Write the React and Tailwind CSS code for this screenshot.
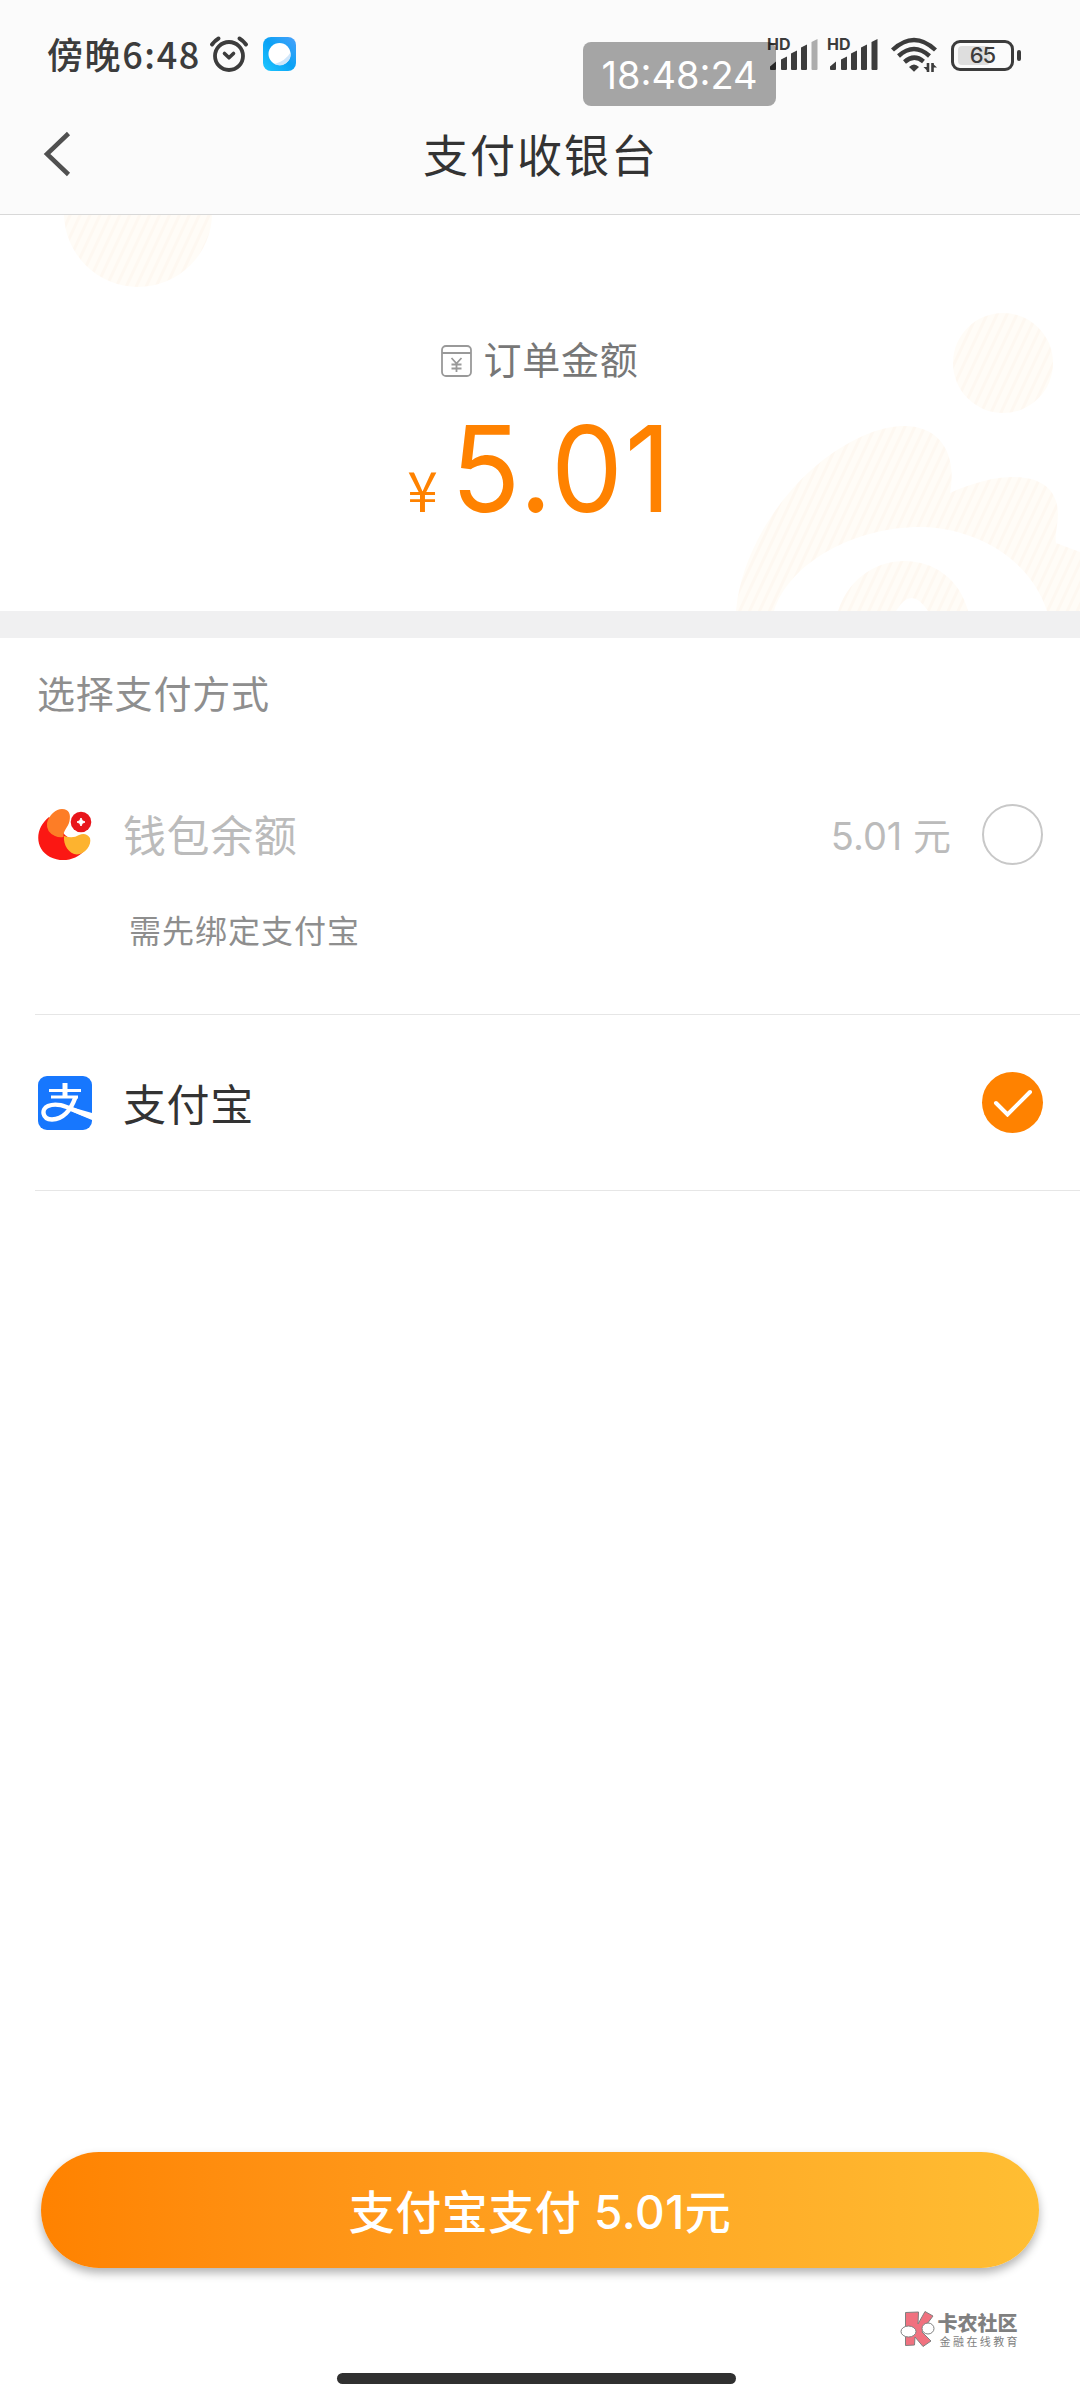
const CJK = "font-['Noto_Sans_CJK_SC',sans-serif]"
const NUM = "font-[Inter,'Noto_Sans_CJK_SC',sans-serif]"

function AlarmIcon() {
  return (
    <svg width="40" height="40" viewBox="0 0 40 40" fill="none" stroke="#3c3c3c" strokeLinecap="round" strokeLinejoin="round">
      <circle cx="20" cy="22" r="14" strokeWidth="3.8" />
      <path d="M15.500 19.500l4.500 4.300 4.500-4.300" strokeWidth="3.6" />
      <path d="M3 10.500q3-4 6.500-6M37 10.500q-3-4-6.500-6" strokeWidth="4" />
    </svg>
  )
}

function BrowserIcon() {
  return (
    <svg width="34" height="36" viewBox="0 0 34 36">
      <defs>
        <linearGradient id="browser" x1="1" y1="0" x2="0" y2="1">
          <stop offset="0" stopColor="#4aa0fa" />
          <stop offset="0.5" stopColor="#0aa2f5" />
          <stop offset="1" stopColor="#1fc8ff" />
        </linearGradient>
      </defs>
      <rect y="1" width="33" height="34" rx="8" fill="url(#browser)" />
      <circle cx="16.500" cy="18" r="11" fill="#fff" />
      <path d="M27.500 16.500a11 11 0 0 1-16 11.500q11-3 16-11.500z" fill="#cfe6fa" />
    </svg>
  )
}

function Signal({ weak }) {
  return (
    <svg className="overflow-visible" width="50" height="34" viewBox="0 0 50 34" fill="#3c3c3c">
      <text x="-1" y="12" fontSize="16" fontWeight="700" fontFamily="Inter">HD</text>
      <path d="M2 31V28.500l6-5V31q0 1-1 1H3q-1 0-1-1z" />
      <path d="M13 31V21.500l6-3V31q0 1-1 1h-4q-1 0-1-1z" />
      <path d="M23 31V15.500l6-3V31q0 1-1 1h-4q-1 0-1-1z" />
      <path d="M33 31V9.500l6-3V31q0 1-1 1h-4q-1 0-1-1z" />
      <path d="M43.500 31V4l6-3V31q0 1-1 1h-4q-1 0-1-1z" fill={weak ? '#adadad' : '#3c3c3c'} />
    </svg>
  )
}

function WifiIcon() {
  return (
    <svg width="46" height="36" viewBox="0 0 46 36" fill="none" stroke="#3c3c3c" strokeWidth="4.400">
      <path d="M1.500 13q21.500-20 43 0" />
      <path d="M7.500 19q15.500-14 31 0" />
      <path d="M13.500 25q9.500-8.500 19-.5" />
      <path d="M18 30q5-5 10 0l-5 4.800z" fill="#3c3c3c" stroke="none" />
      <path d="M37 26v9M41.500 35v-9" strokeWidth="2.600" />
      <path d="M32.500 30h5v5zM41 26l5 4.500h-5z" fill="#3c3c3c" stroke="none" />
    </svg>
  )
}

function Battery() {
  return (
    <div className="flex items-center gap-[3px]">
      <div className="relative flex h-[31px] w-[63px] items-center justify-center rounded-[9px] border-[3px] border-[#3c3c3c]">
        <div className="absolute top-[3px] left-[4px] h-[19px] w-[32px] rounded-[4px] bg-[#dedede]" />
        <span className="relative font-[Inter] text-[22px] leading-none font-medium tracking-[-1px] text-[#3c3c3c]">65</span>
      </div>
      <div className="h-[11px] w-[4px] rounded-[2px] bg-[#3c3c3c]" />
    </div>
  )
}

function StatusBar() {
  return (
    <div className="relative flex h-[108px] items-start justify-between pr-[59px] pl-[47px]">
      <div className="flex items-center pt-[34px]">
        <span className={`${CJK} -mt-[2px] text-[36px] leading-[40px] font-medium tracking-[1.600px] text-[#3c3c3c]`}>傍晚6:48</span>
        <div className="ml-[8px]"><AlarmIcon /></div>
        <div className="ml-[14px]"><BrowserIcon /></div>
      </div>
      <div className="flex items-center pt-[37px]">
        <Signal weak />
        <div className="ml-[10px]"><Signal /></div>
        <div className="ml-[13px]"><WifiIcon /></div>
        <div className="ml-[14px]"><Battery /></div>
      </div>
      {/* floating clock, see-through over the first signal icon */}
      <div className="absolute top-[42px] left-[583px] flex h-[64px] w-[193px] items-center justify-center rounded-[8px] bg-black/34">
        <span className={`${NUM} mt-[2px] text-[38px] leading-none text-white`}>18:48:24</span>
      </div>
    </div>
  )
}

function TitleBar() {
  return (
    <div className="flex h-[107px] items-start border-b border-[#d8d8d8]">
      <svg className="mt-[23px] ml-[43px]" width="28" height="46" viewBox="0 0 28 46" fill="none" stroke="#505050" strokeWidth="4.500">
        <path d="M25.500 2.500L4 23l21.500 20.500" />
      </svg>
      <h1 className={`${CJK} mt-[14px] mr-[70px] flex-1 text-center text-[45px] leading-[64px] tracking-[2px] text-[#333]`}>支付收银台</h1>
    </div>
  )
}

function HeroPattern() {
  return (
    <svg className="absolute inset-0" width="1080" height="396" viewBox="0 215 1080 396">
      <defs>
        <pattern id="hatch" width="9" height="9" patternUnits="userSpaceOnUse" patternTransform="rotate(25)">
          <rect width="9" height="9" fill="#fffcf7" />
          <rect width="3" height="9" fill="#fef8f1" />
        </pattern>
      </defs>
      <g fill="url(#hatch)">
        <circle cx="138" cy="213" r="74" />
        <circle cx="1003" cy="363" r="50" />
        <path d="M736 611C742 540 800 460 870 433C925 412 960 440 950 493C1000 470 1050 470 1057 505C1060 520 1054 535 1056 543L1080 552V611H1047C1030 560 980 530 925 527C860 525 790 560 774 611z" />
        <path d="M838 611C850 575 880 561 904 561C935 561 960 580 968 611H928Q911 585 896 611z" />
      </g>
    </svg>
  )
}

function OrderAmount() {
  return (
    <section className="relative flex h-[396px] flex-col items-center bg-white">
      <HeroPattern />
      <div className="relative mt-[118px] flex items-center gap-[11px]">
        <svg width="31" height="32" viewBox="0 0 31 32" fill="none" stroke="#999" strokeWidth="1.800">
          <rect x="1" y="1" width="29" height="30" rx="4" />
          <path d="M1 8h29M10.500 13l5 5.500 5-5.500M15.500 18.500V27M10.500 19.500h10M10.500 23.500h10" />
        </svg>
        <span className={`${CJK} -mt-[3px] mb-[3px] text-[38px] leading-[56px] tracking-[0.800px] text-[#777]`}>订单金额</span>
      </div>
      <div className="relative mt-[20px] -mr-[12px] flex items-baseline gap-[13px] text-[#ff8200]">
        <span className={`${CJK} text-[55px] leading-none`}>¥</span>
        <span className={`${NUM} origin-left scale-x-95 text-[120px] leading-[120px] tracking-[2px]`}>5.01</span>
      </div>
    </section>
  )
}

function WalletIcon() {
  return (
    <svg width="54" height="54" viewBox="0 0 54 54">
      <path d="M11 10C-4 22-3 42 12 50C24 56 39 53 47 43L27 28z" fill="#fb1713" />
      <path d="M9 16C11 8 18 2 24 2C31 2 33 7 31.500 14C30 21 25 23 25.500 30Q21 31 17 29Q8 25 9 16z" fill="#fd7d26" />
      <path d="M26 29Q35 32 41 28Q48 25 52 31C54 38 47 47 39 47.500C31 47 25 38 26 29z" fill="#fdb32f" />
      <circle cx="43" cy="15" r="10.300" fill="#e8151b" />
      <path d="M43 11l1.300 2.700 2.700 1.300-2.700 1.300-1.300 2.700-1.300-2.700-2.700-1.300 2.700-1.300z" fill="#fff" stroke="#fff" />
    </svg>
  )
}

function AlipayIcon() {
  return (
    <svg width="54" height="54" viewBox="0 0 54 54">
      <rect width="54" height="54" rx="9" fill="#1777fe" />
      <g fill="none" stroke="#fff">
        <path d="M11 14.500h32M13 21h27" strokeWidth="3" />
        <path d="M27 7v14" strokeWidth="5" />
        <path d="M37.500 21C34 31 27 43 14 43.500C4 43 3 33 10 30C22 25 33 34 54 41" strokeWidth="4.400" />
      </g>
      <path d="M33 31L54 37v7L30 34z" fill="#fff" />
    </svg>
  )
}

function Radio({ checked }) {
  if (!checked) return <div className="size-[61px] rounded-full border-2 border-[#c8c8c8] bg-white" />
  return (
    <div className="flex size-[61px] items-center justify-center rounded-full bg-[#ff8200]">
      <svg width="40" height="28" viewBox="0 0 40 28" fill="none" stroke="#fff" strokeWidth="4" strokeLinecap="round">
        <path d="M3 14l11.500 11.500L37 3" />
      </svg>
    </div>
  )
}

function PaymentMethods() {
  return (
    <section className="pl-[35px]">
      <h2 className={`${CJK} pt-[26px] pb-[2px] pl-[2px] text-[38px] leading-[56px] tracking-[0.800px] text-[#8e8e8e]`}>选择支付方式</h2>
      <div className="h-[293px] border-b border-[#e6e6e6] pt-[82px]">
        <div className="flex h-[60px] items-center pr-[37px] pl-[3px]">
          <WalletIcon />
          <span className={`${CJK} -mt-[3px] ml-[31px] flex-1 text-[43px] leading-[60px] tracking-[0.600px] text-[#bbb]`}>钱包余额</span>
          <span className={`${NUM} mt-[4px] mr-[31px] text-[38px] leading-[60px] text-[#bbb]`}>5.01 元</span>
          <Radio />
        </div>
        <p className={`${CJK} mt-[41px] pl-[94px] text-[32px] leading-[48px] tracking-[1px] text-[#8e8e8e]`}>需先绑定支付宝</p>
      </div>
      <div className="flex h-[176px] items-center border-b border-[#e6e6e6] pr-[37px] pl-[3px]">
        <AlipayIcon />
        <span className={`${CJK} -mt-[2px] ml-[31px] flex-1 text-[43px] leading-[60px] tracking-[0.600px] text-[#333]`}>支付宝</span>
        <Radio checked />
      </div>
    </section>
  )
}

function Watermark() {
  return (
    <div className="mt-[43px] mr-[60px] flex items-center gap-[3px] self-end">
      <svg width="35" height="37" viewBox="0 0 35 37" fill="#f0717f" stroke="#808080" strokeWidth="1">
        <path d="M5.500 1.500l13-.5-.5 12 7-12.500 8 4.500-9 12-2 4 9 9-8 5.500-8-9.500-.5 8-9 .5z" />
        <ellipse cx="8.500" cy="20.500" rx="7.500" ry="5.500" fill="#fff" />
        <ellipse cx="28" cy="17.500" rx="6" ry="5.500" fill="#fff" />
      </svg>
      <div className={`${CJK} flex flex-col gap-[1px] text-[#808080]`}>
        <span className="text-[20px] leading-[21px] font-black">卡农社区</span>
        <span className="pl-[2px] text-[11px] leading-[14px] tracking-[2.400px]">金融在线教育</span>
      </div>
    </div>
  )
}

export default function App() {
  return (
    <main className="flex h-[2400px] w-[1080px] flex-col overflow-hidden bg-white">
      <header className="bg-[#fbfbfb]">
        <StatusBar />
        <TitleBar />
      </header>
      <OrderAmount />
      <div className="h-[27px] bg-[#f0f0f1]" />
      <PaymentMethods />
      <div className="mt-auto flex h-[248px] flex-col">
        <button className={`${NUM} mx-[41px] h-[116px] shrink-0 rounded-full bg-linear-to-r from-[#ff8200] to-[#ffbe33] pt-[4px] text-[46px] font-medium tracking-[0.500px] text-white shadow-[0_5px_10px_rgba(0,0,0,0.3)]`}>
          支付宝支付 5.01元
        </button>
        <Watermark />
        <div className="mt-auto mr-[7px] mb-[16px] h-[11px] w-[399px] self-center rounded-full bg-[#303030]" />
      </div>
    </main>
  )
}
